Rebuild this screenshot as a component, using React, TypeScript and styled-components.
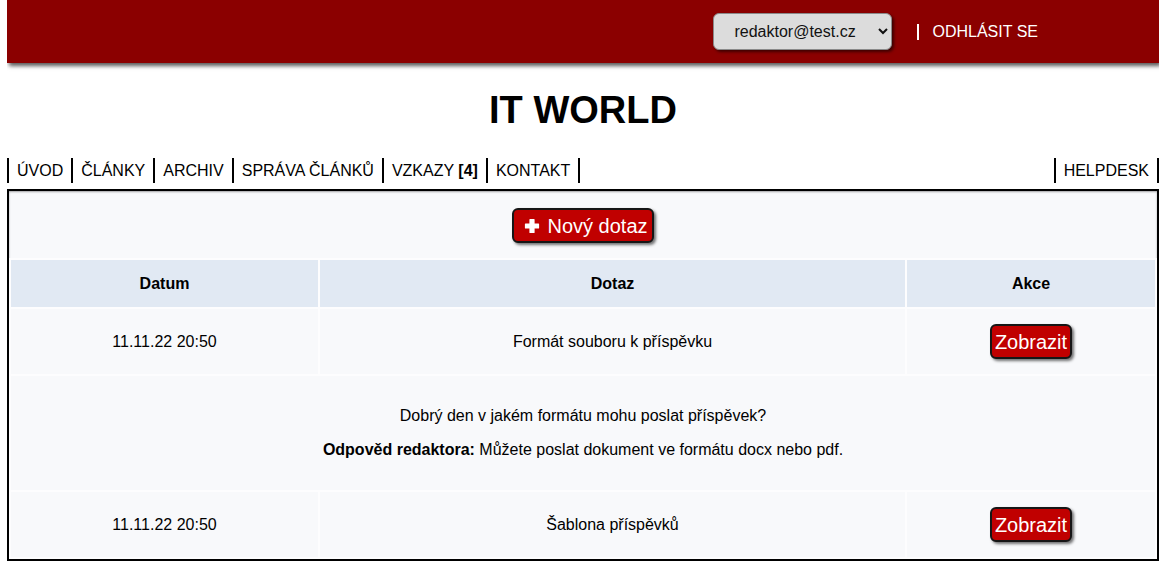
import React from 'react';
import styled, { createGlobalStyle } from 'styled-components';

const GlobalStyle = createGlobalStyle`
  body {
    margin: 0 7px 8px;
    background: #fff;
    font-family: "Liberation Sans", Arial, sans-serif;
    font-size: 16px;
    color: #000;
  }
`;

const TopBar = styled.header`
  display: flex;
  align-items: center;
  justify-content: flex-end;
  height: 63px;
  padding-right: 121px;
  background-color: #8b0000;
  box-shadow: 2px 3px 4px rgba(0, 0, 0, 0.65);
`;

const UserSelect = styled.select`
  width: 179px;
  height: 37px;
  padding: 0 8px 0 16px;
  border: 1px solid #8a8a8a;
  border-radius: 6px;
  background-color: #dcdcdc;
  box-shadow: 2px 2px 3px rgba(0, 0, 0, 0.55);
  font-family: inherit;
  font-size: 16px;
  color: #111;
`;

const Separator = styled.span`
  width: 0;
  height: 16px;
  margin: 0 13px 0 25px;
  border-left: 2px solid #fff;
`;

const LogoutLink = styled.a`
  color: #fff;
  font-size: 16px;
  text-decoration: none;
`;

const Title = styled.h1`
  margin: 25px 0 26px;
  font-size: 38px;
  line-height: 44px;
  font-weight: bold;
  text-align: center;
`;

const Nav = styled.nav`
  display: flex;
  justify-content: space-between;
  margin-bottom: 6px;
`;

const NavGroup = styled.ul`
  display: flex;
  margin: 0;
  padding: 0;
  list-style: none;
  border-right: 2px solid #000;
`;

const NavItem = styled.li`
  padding: 4px 8px 3px;
  border-left: 2px solid #000;
  line-height: 18px;
  font-size: 16px;
`;

const Panel = styled.main`
  border: 2px solid #000;
  background-color: #f8f9fb;
  box-shadow: inset 0 1px 2px rgba(0, 0, 0, 0.35);
`;

const Toolbar = styled.div`
  display: flex;
  justify-content: center;
  padding: 17px 0 15px;
`;

const RedButton = styled.button<{ $wide?: boolean }>`
  display: inline-flex;
  align-items: center;
  gap: 7px;
  height: 35px;
  padding: ${(p) => (p.$wide ? '0 4px 0 10px' : '0 3px')};
  border: 2px solid #161616;
  border-radius: 6px;
  background-color: #c00000;
  box-shadow: 2px 2px 3px rgba(0, 0, 0, 0.55);
  color: #fff;
  font-family: inherit;
  font-size: 20px;
  line-height: 1;
`;

const Table = styled.table`
  width: 100%;
  border-spacing: 2px;
  table-layout: fixed;
  background-color: #fdfdfe;
`;

const HeadCell = styled.th<{ $w?: number }>`
  width: ${(p) => (p.$w ? `${p.$w}px` : 'auto')};
  height: 47px;
  padding: 0;
  background-color: #e1e9f3;
  font-size: 16px;
  font-weight: bold;
  text-align: center;
`;

const Cell = styled.td`
  height: 65px;
  padding: 0;
  background-color: #f8f9fb;
  text-align: center;
  vertical-align: middle;
`;

const DetailCell = styled.td`
  padding: 15px 0;
  background-color: #f8f9fb;
  text-align: center;
  line-height: 18px;

  p {
    margin: 16px 0;
  }
`;

const PlusIcon = () => (
  <svg width="16" height="16" viewBox="0 0 16 16" aria-hidden="true">
    <path
      d="M6 1.5h4v4.5h4.5v4H10v4.5H6V10H1.5V6H6z"
      fill="#fff"
      stroke="#fff"
      strokeWidth="1.2"
      strokeLinejoin="round"
    />
  </svg>
);

const questions = [
  {
    date: '11.11.22 20:50',
    title: 'Formát souboru k příspěvku',
    text: 'Dobrý den v jakém formátu mohu poslat příspěvek?',
    answer: 'Můžete poslat dokument ve formátu docx nebo pdf.',
    open: true,
  },
  {
    date: '11.11.22 20:50',
    title: 'Šablona příspěvků',
    text: '',
    answer: '',
    open: false,
  },
];

const App = () => {
  return (
    <>
      <GlobalStyle />
      <TopBar>
        <UserSelect defaultValue="redaktor">
          <option value="redaktor">redaktor@test.cz</option>
        </UserSelect>
        <Separator />
        <LogoutLink href="#">ODHLÁSIT SE</LogoutLink>
      </TopBar>

      <Title>IT WORLD</Title>

      <Nav>
        <NavGroup>
          <NavItem>ÚVOD</NavItem>
          <NavItem>ČLÁNKY</NavItem>
          <NavItem>ARCHIV</NavItem>
          <NavItem>SPRÁVA ČLÁNKŮ</NavItem>
          <NavItem>
            VZKAZY <b>[4]</b>
          </NavItem>
          <NavItem>KONTAKT</NavItem>
        </NavGroup>
        <NavGroup>
          <NavItem>HELPDESK</NavItem>
        </NavGroup>
      </Nav>

      <Panel>
        <Toolbar>
          <RedButton $wide>
            <PlusIcon />
            Nový dotaz
          </RedButton>
        </Toolbar>

        <Table>
          <thead>
            <tr>
              <HeadCell $w={307}>Datum</HeadCell>
              <HeadCell>Dotaz</HeadCell>
              <HeadCell $w={248}>Akce</HeadCell>
            </tr>
          </thead>
          <tbody>
            {questions.map((q, i) => (
              <React.Fragment key={i}>
                <tr>
                  <Cell>{q.date}</Cell>
                  <Cell>{q.title}</Cell>
                  <Cell>
                    <RedButton>Zobrazit</RedButton>
                  </Cell>
                </tr>
                {q.open && (
                  <tr>
                    <DetailCell colSpan={3}>
                      <p>{q.text}</p>
                      <p>
                        <b>Odpověd redaktora:</b> {q.answer}
                      </p>
                    </DetailCell>
                  </tr>
                )}
              </React.Fragment>
            ))}
          </tbody>
        </Table>
      </Panel>
    </>
  );
};

export default App;
